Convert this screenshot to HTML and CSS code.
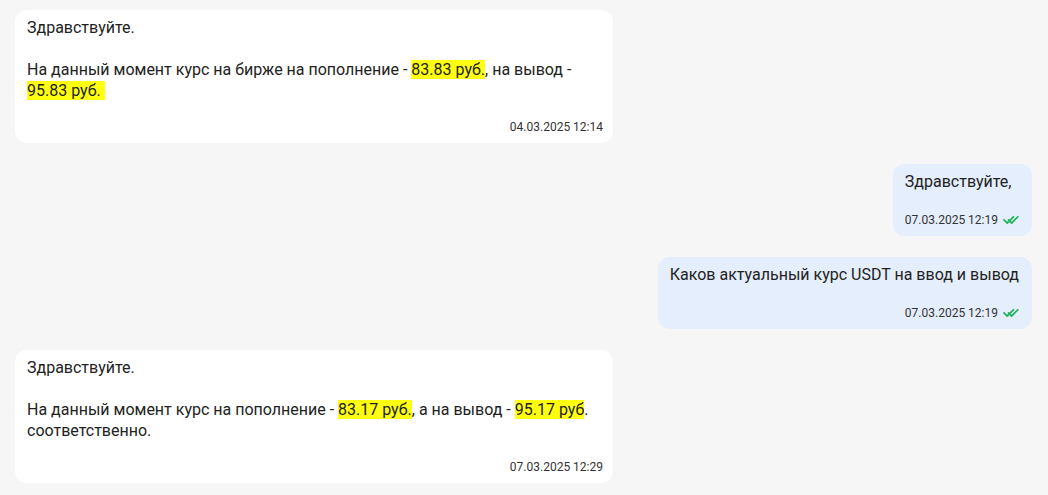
FILE: index.html
```html
<!DOCTYPE html>
<html lang="ru">
<head>
<meta charset="utf-8">
<title>Чат</title>
<link rel="stylesheet" href="styles.css">
</head>
<body>
<div class="chat">
  <div class="msg msg-in">
    <div class="msg-text">Здравствуйте.<br><br>На данный момент курс на бирже на пополнение - <span class="hl">83.83 руб.</span>, на вывод - <span class="hl">95.83 руб.&nbsp;</span></div>
    <div class="msg-meta"><span class="time">04.03.2025 12:14</span></div>
  </div>

  <div class="msg msg-out">
    <div class="msg-text">Здравствуйте,</div>
    <div class="msg-meta"><span class="time">07.03.2025 12:19</span>
      <svg class="check" viewBox="0 0 16 10" width="16" height="10" aria-hidden="true"><path d="M1 4.8 L4.2 8 L10.4 1.8" fill="none" stroke="#27b561" stroke-width="1.8" stroke-linecap="round" stroke-linejoin="round"/><path d="M5.6 5 L8.6 8 L14.8 1.8" fill="none" stroke="#27b561" stroke-width="1.8" stroke-linecap="round" stroke-linejoin="round"/></svg>
    </div>
  </div>

  <div class="msg msg-out">
    <div class="msg-text">Каков актуальный курс USDT на ввод и вывод</div>
    <div class="msg-meta"><span class="time">07.03.2025 12:19</span>
      <svg class="check" viewBox="0 0 16 10" width="16" height="10" aria-hidden="true"><path d="M1 4.8 L4.2 8 L10.4 1.8" fill="none" stroke="#27b561" stroke-width="1.8" stroke-linecap="round" stroke-linejoin="round"/><path d="M5.6 5 L8.6 8 L14.8 1.8" fill="none" stroke="#27b561" stroke-width="1.8" stroke-linecap="round" stroke-linejoin="round"/></svg>
    </div>
  </div>

  <div class="msg msg-in">
    <div class="msg-text">Здравствуйте.<br><br>На данный момент курс на пополнение - <span class="hl">83.17 руб.</span>, а на вывод - <span class="hl">95.17 руб</span>. соответственно.</div>
    <div class="msg-meta"><span class="time">07.03.2025 12:29</span></div>
  </div>
</div>
</body>
</html>
```

FILE: styles.css
```css
html, body {
  margin: 0;
  padding: 0;
}

body {
  background: #f6f6f6;
  font-family: Roboto, "Noto Sans", "Liberation Sans", sans-serif;
  color: #222222;
  width: 1048px;
  height: 495px;
  overflow: hidden;
}

.chat {
  display: flex;
  flex-direction: column;
  gap: 21px;
  padding: 10px 16px 0 15px;
}

.msg {
  border-radius: 12px;
  padding: 7px 12px 8px 12px;
  box-sizing: border-box;
}

.msg-in {
  align-self: flex-start;
  width: 598px;
  background: #ffffff;
}

.msg-out {
  align-self: flex-end;
  background: #e5eefc;
  padding-right: 13px;
}

.msg-text {
  font-size: 16px;
  line-height: 21px;
}

.hl {
  background: #ffff0f;
}

.msg-meta {
  display: flex;
  justify-content: flex-end;
  align-items: center;
  gap: 5px;
  font-size: 12px;
  line-height: 16px;
  color: #333333;
  margin-top: 18px;
}

.msg-in .msg-meta {
  margin-right: -2px;
}

.msg-out .msg-meta {
  margin-top: 20px;
}

.check {
  display: block;
  flex: none;
}
```
